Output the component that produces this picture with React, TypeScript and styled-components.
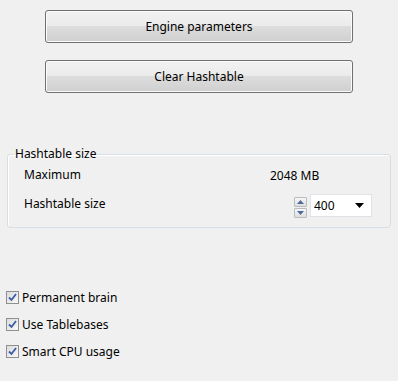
import styled, { createGlobalStyle } from "styled-components"

const GlobalStyle = createGlobalStyle`
    html, body {
        margin: 0;
        padding: 0;
        background: #f0f0f0;
    }
    body {
        font-family: "Segoe UI", "Noto Sans", sans-serif;
        font-size: 12px;
        color: #000;
    }
`

const Page = styled.div`
    width: 398px;
    height: 381px;
    padding-top: 10px;
    box-sizing: border-box;
    overflow: hidden;
`

const ButtonColumn = styled.div`
    display: flex;
    flex-direction: column;
    gap: 17px;
    margin-left: 45px;
    width: 308px;
`

const PushButton = styled.button`
    height: 33px;
    width: 100%;
    border: 1px solid #707070;
    border-radius: 3px;
    box-shadow: inset 0 0 0 1px #fbfbfb;
    background: linear-gradient(to bottom, #f2f2f2 0%, #ebebeb 50%, #dddddd 50%, #cfcfcf 100%);
    font-family: inherit;
    font-size: 12px;
    color: #000;
    padding: 0;
`

const GroupBox = styled.fieldset`
    margin: 53px 0 0 7px;
    width: 384px;
    box-sizing: border-box;
    border: 1px solid #d5dfe5;
    border-radius: 3px;
    padding: 3px 0 10px 16px;
    display: flex;
    flex-direction: column;
    gap: 9px;
    box-shadow: inset 1px 1px 0 #fff;
`

const GroupTitle = styled.legend`
    margin-left: -10px;
    padding: 0 1px;
    line-height: 16px;
`

const Row = styled.div<{ $height: number }>`
    display: flex;
    align-items: center;
    height: ${p => p.$height}px;
`

const Label = styled.span<{ $nudge?: number }>`
    width: 246px;
    line-height: 16px;
    margin-top: ${p => p.$nudge ?? 0}px;
`

const Spinner = styled.div`
    display: flex;
    flex-direction: column;
    gap: 1px;
    margin: 3px 3px 0 24px;
`

const SpinButton = styled.div`
    width: 11px;
    height: 8px;
    border: 1px solid #b8bcc0;
    border-radius: 1px;
    background: linear-gradient(to bottom, #f6f6f6, #dedede);
    display: flex;
    align-items: center;
    justify-content: center;
`

const Combo = styled.div`
    width: 62px;
    height: 23px;
    box-sizing: border-box;
    border: 1px solid #dfe2e6;
    background: #fff;
    display: flex;
    align-items: center;
    justify-content: space-between;
    padding: 0 7px 0 3px;
`

const CheckList = styled.div`
    margin-top: 59px;
    display: flex;
    flex-direction: column;
    gap: 7px;
`

const CheckRow = styled.label`
    display: flex;
    align-items: center;
    gap: 3px;
    height: 20px;
    padding-left: 6px;
`

const Box = styled.span`
    width: 13px;
    height: 13px;
    box-sizing: border-box;
    border: 1px solid #8e8f8f;
    background: linear-gradient(135deg, #dcdcdc, #f8f8f8);
    display: flex;
    align-items: center;
    justify-content: center;
`

function Arrow({ up }: { up?: boolean }) {
    return (
        <svg width="7" height="4" viewBox="0 0 7 4">
            <path d={up ? "M0 4 L3.5 0 L7 4 Z" : "M0 0 L3.5 4 L7 0 Z"} fill="#4e6a9c" />
        </svg>
    )
}

function CheckBox({ label }: { label: string }) {
    return (
        <CheckRow>
            <Box>
                <svg width="9" height="9" viewBox="0 0 9 9">
                    <path d="M1 4.5 L3.5 7 L8 1" stroke="#3c5ba8" strokeWidth="1.8" fill="none" />
                </svg>
            </Box>
            <span>{label}</span>
        </CheckRow>
    )
}

export default function App() {
    return (
        <Page>
            <GlobalStyle />
            <ButtonColumn>
                <PushButton>Engine parameters</PushButton>
                <PushButton>Clear Hashtable</PushButton>
            </ButtonColumn>

            <GroupBox>
                <GroupTitle>Hashtable size</GroupTitle>
                <Row $height={20}>
                    <Label>Maximum</Label>
                    <span>2048 MB</span>
                </Row>
                <Row $height={23}>
                    <Label $nudge={-4}>Hashtable size</Label>
                    <Spinner>
                        <SpinButton><Arrow up /></SpinButton>
                        <SpinButton><Arrow /></SpinButton>
                    </Spinner>
                    <Combo>
                        <span>400</span>
                        <svg width="9" height="5" viewBox="0 0 9 5">
                            <path d="M0 0 L4.5 5 L9 0 Z" fill="#000" />
                        </svg>
                    </Combo>
                </Row>
            </GroupBox>

            <CheckList>
                <CheckBox label="Permanent brain" />
                <CheckBox label="Use Tablebases" />
                <CheckBox label="Smart CPU usage" />
            </CheckList>
        </Page>
    )
}
